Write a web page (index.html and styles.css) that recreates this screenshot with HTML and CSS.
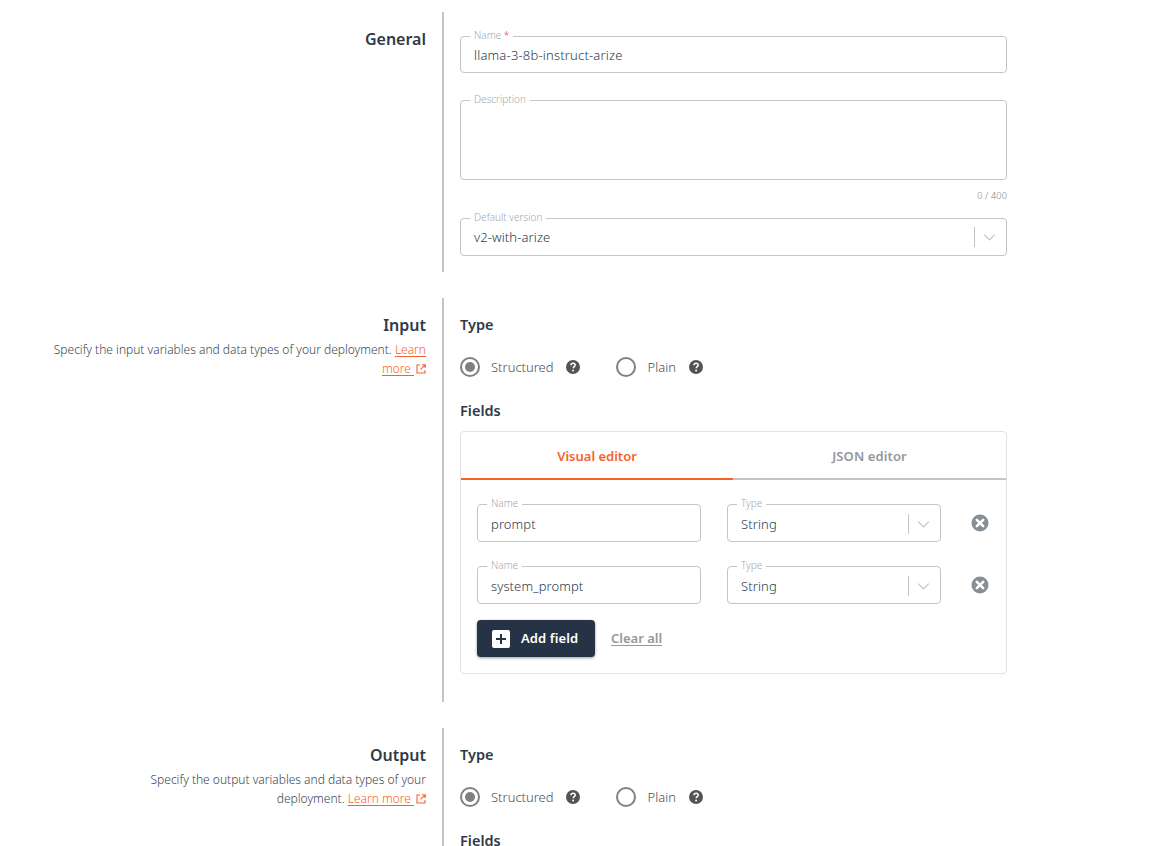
FILE: index.html
```html
<!DOCTYPE html>
<html lang="en">
<head>
<meta charset="utf-8">
<title>Deployment form</title>
<link rel="stylesheet" href="styles.css">
</head>
<body>
<svg class="defs" width="0" height="0" aria-hidden="true">
  <symbol id="chev" viewBox="0 0 16 10"><path d="M1.5 1.5l6.5 6.5 6.5-6.5" fill="none" stroke="#c4c4c4" stroke-width="1.5"/></symbol>
  <symbol id="help" viewBox="0 0 14 14"><circle cx="7" cy="7" r="7" fill="#545454"/><path d="M4.9 5.3c.1-1.3 1-2 2.2-2 1.2 0 2.1.8 2.1 1.8 0 1.6-2 1.6-2 3.2" fill="none" stroke="#fff" stroke-width="1.5"/><circle cx="7.1" cy="10.5" r=".95" fill="#fff"/></symbol>
  <symbol id="close" viewBox="0 0 18 18"><circle cx="9" cy="9" r="8.5" fill="#868e96"/><path d="M5.8 5.8l6.4 6.4M12.2 5.8l-6.4 6.4" stroke="#fff" stroke-width="2.6" stroke-linecap="round"/></symbol>
  <symbol id="ext" viewBox="0 0 10 10"><path d="M4 1H1v8h8V6" fill="none" stroke="#f4642a" stroke-width="1.1"/><path d="M6 .8h3.2V4M9 1L4.6 5.4" fill="none" stroke="#f4642a" stroke-width="1.1"/></symbol>
</svg>
<div class="page">

  <section class="section">
    <aside class="side"><h2 class="side-title">General</h2></aside>
    <div class="body body-general">
      <div class="field field-name">
        <span class="legend">Name<span class="req"> *</span></span>
        <span class="value">llama-3-8b-instruct-arize</span>
      </div>
      <div class="field field-area"><span class="legend">Description</span></div>
      <div class="counter">0 / 400</div>
      <div class="field field-select">
        <span class="legend">Default version</span>
        <span class="value">v2-with-arize</span>
        <span class="sep"></span>
        <svg class="chev"><use href="#chev"/></svg>
      </div>
    </div>
  </section>

  <section class="section">
    <aside class="side">
      <h2 class="side-title">Input</h2>
      <p class="side-text">Specify the input variables and data types of your deployment. <a class="link" href="#">Learn more <svg class="ext"><use href="#ext"/></svg></a></p>
    </aside>
    <div class="body">
      <h3 class="label">Type</h3>
      <div class="radios">
        <span class="radio on"></span><span class="radio-text">Structured</span><svg class="help"><use href="#help"/></svg>
        <span class="radio radio-second"></span><span class="radio-text">Plain</span><svg class="help"><use href="#help"/></svg>
      </div>
      <h3 class="label">Fields</h3>
      <div class="card">
        <div class="tabs">
          <div class="tab active">Visual editor</div>
          <div class="tab">JSON editor</div>
        </div>
        <div class="card-body">
          <div class="row">
            <div class="field row-name"><span class="legend">Name</span><span class="value">prompt</span></div>
            <div class="field row-type"><span class="legend">Type</span><span class="value">String</span><span class="sep"></span><svg class="chev"><use href="#chev"/></svg></div>
            <svg class="remove"><use href="#close"/></svg>
          </div>
          <div class="row">
            <div class="field row-name"><span class="legend">Name</span><span class="value">system_prompt</span></div>
            <div class="field row-type"><span class="legend">Type</span><span class="value">String</span><span class="sep"></span><svg class="chev"><use href="#chev"/></svg></div>
            <svg class="remove"><use href="#close"/></svg>
          </div>
          <div class="actions">
            <button class="add" type="button"><span class="plus"></span><span class="add-text">Add field</span></button>
            <a class="clear" href="#">Clear all</a>
          </div>
        </div>
      </div>
    </div>
  </section>

  <section class="section">
    <aside class="side">
      <h2 class="side-title">Output</h2>
      <p class="side-text side-narrow">Specify the output variables and data types of your deployment. <a class="link" href="#">Learn more <svg class="ext"><use href="#ext"/></svg></a></p>
    </aside>
    <div class="body body-output">
      <h3 class="label">Type</h3>
      <div class="radios">
        <span class="radio on"></span><span class="radio-text">Structured</span><svg class="help"><use href="#help"/></svg>
        <span class="radio radio-second"></span><span class="radio-text">Plain</span><svg class="help"><use href="#help"/></svg>
      </div>
      <h3 class="label">Fields</h3>
    </div>
  </section>

</div>
</body>
</html>
```
FILE: styles.css
```css
* { box-sizing: border-box; }
html, body { margin: 0; height: 846px; overflow: hidden; background: #fff; }
body { font-family: "Noto Sans", "Open Sans", sans-serif; color: #2b3a4a; font-size: 14px; }
.defs { position: absolute; }
.page { padding-top: 12px; }
.section { display: flex; margin-bottom: 26px; }
.side { width: 426px; margin-right: 16px; text-align: right; flex: none; }
.side-title { margin: 16px 0 0; font-size: 16px; line-height: 22px; font-weight: 600; color: #2f3a45; }
.side-text { margin: 4px 0 0 50px; font-size: 12px; line-height: 19px; font-weight: 300; color: #3a4652; }
.side-narrow { margin-left: 150px; }
.link { color: #f4642a; text-decoration: underline; text-underline-offset: 2px; }
.ext { width: 10px; height: 10px; margin-left: 2px; vertical-align: -1px; }
.body { width: 565px; border-left: 2px solid #c4c4c4; padding-left: 16px; }
.body-general { height: 260px; padding-top: 24px; }
.body-output { height: 130px; }
.field { position: relative; display: flex; align-items: center; border: 1px solid #c4c4c4; border-radius: 4px; padding: 2px 13px 0; height: 38px; background: #fff; }
.field-name { height: 37px; margin-bottom: 27px; padding-top: 0; }
.field-name .value { letter-spacing: .18px; }
.field-select { padding-top: 0; }
.field-area { height: 80px; }
.counter { font-size: 9px; line-height: 12px; font-weight: 300; text-align: right; color: #77808a; margin: 10px 0 16px; letter-spacing: .2px; }
.legend { position: absolute; top: -8px; left: 9px; padding: 0 4px; background: #fff; font-size: 10px; line-height: 12px; font-weight: 300; color: #a3a8ad; }
.req { color: #e5484d; }
.value { font-size: 13px; font-weight: 300; color: #2b3a4a; flex: 1; line-height: 18px; letter-spacing: .1px; }
.sep { width: 1px; height: 20px; background: #c4c4c4; margin-right: 8px; }
.chev { width: 13px; height: 9px; margin-right: -3px; }
.label { margin: 0; font-size: 14.5px; line-height: 20px; font-weight: 600; color: #2f3a45; }
.body > .label:first-child { margin-top: 16px; }
.radios { display: flex; align-items: center; height: 22px; margin: 22px 0 22px; }
.radio { width: 20px; height: 20px; border-radius: 50%; border: 2px solid #808080; background: #fff; display: inline-block; position: relative; flex: none; }
.radio.on::after { content: ""; position: absolute; inset: 3px; border-radius: 50%; background: #808080; }
.radio-second { margin-left: 36px; }
.radio-text { margin-left: 11px; font-size: 13px; font-weight: 300; color: #4a4f55; }
.radio-second + .radio-text { margin-left: 12px; }
.help { width: 14px; height: 14px; margin-left: 12px; flex: none; }
.help:last-child { margin-left: 13px; }
.card { margin-top: 11px; margin-bottom: 28px; height: 243px; border: 1px solid #e2e2e2; border-radius: 4px; }
.tabs { display: flex; height: 48px; }
.tab { flex: 1; text-align: center; padding-top: 14px; font-size: 13px; line-height: 20px; font-weight: 600; color: #94989c; border-bottom: 2px solid #c4c4c4; }
.tab + .tab { letter-spacing: .1px; }
.tab.active { flex: 0 0 272px; color: #f4642a; border-bottom-color: #f4642a; }
.card-body { padding: 24px 16px 0; }
.row { display: flex; align-items: center; margin-bottom: 24px; }
.row-name { width: 224px; margin-right: 26px; }
.row-type { width: 214px; margin-right: 30px; }
.remove { width: 18px; height: 18px; flex: none; margin-top: -1px; }
.actions { display: flex; align-items: center; margin-top: -8px; }
.add { display: flex; align-items: center; height: 37px; width: 118px; padding: 0 0 0 15px; border: 0; border-radius: 4px; background: #263347; color: #fff; font: 600 13px "Noto Sans", "Open Sans", sans-serif; box-shadow: 0 1px 3px rgba(0,0,0,.4); }
.add-text { margin-top: -1px; letter-spacing: .1px; }
.plus { width: 18px; height: 18px; margin-right: 11px; border-radius: 2px; background: linear-gradient(#263347,#263347) center/10px 2px no-repeat, linear-gradient(#263347,#263347) center/2px 10px no-repeat, #fff; }
.clear { margin-left: 16px; margin-top: -2px; font-size: 13px; font-weight: 600; color: #94989c; text-decoration: underline; text-underline-offset: 2px; }
```
